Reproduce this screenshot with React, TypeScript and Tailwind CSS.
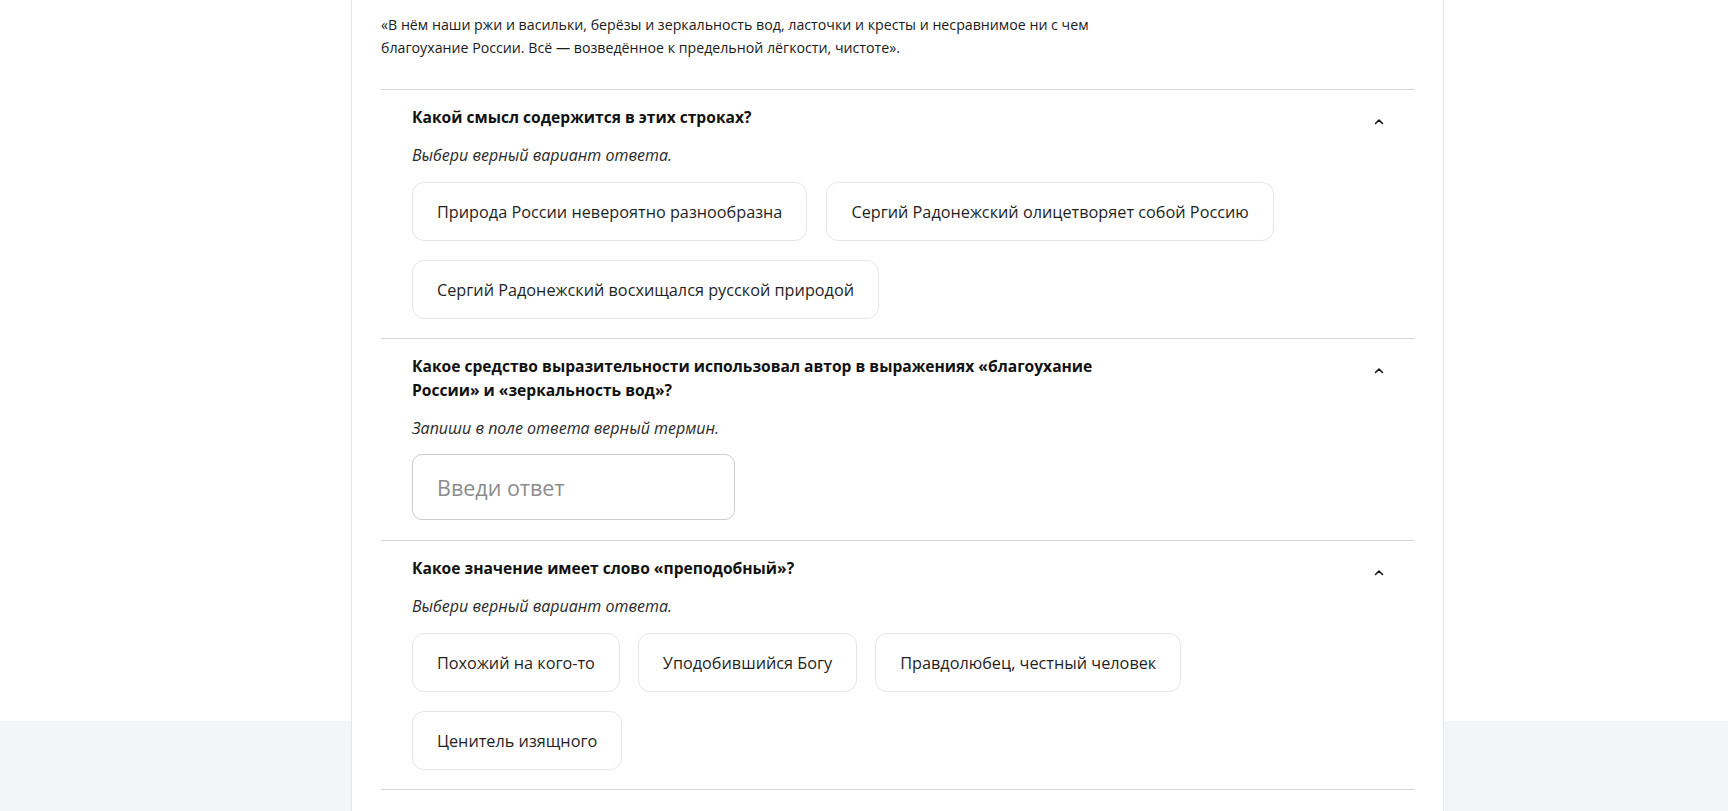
import React from "react";

function Chevron() {
  return (
    <svg width="10" height="7" viewBox="0 0 10 7" fill="none" className="block">
      <path d="M1.5 5.5 L5 2 L8.5 5.5" stroke="#111" strokeWidth="1.5" strokeLinecap="round" strokeLinejoin="round" />
    </svg>
  );
}

function Option({ text }: { text: string }) {
  return (
    <button
      type="button"
      className="h-[59px] px-[24px] rounded-[12px] border border-[#e6e6e6] bg-white text-[16.25px] text-[#1f1f1f] leading-6 whitespace-nowrap"
    >
      {text}
    </button>
  );
}

function Section({
  title,
  hint,
  children,
}: {
  title: string;
  hint: string;
  children: React.ReactNode;
}) {
  return (
    <div className="border-t border-[#d6d6d6] pl-[31px] pr-[31px] pt-[15px] pb-[19px]">
      <div className="flex items-start justify-between">
        <h3 className="max-w-[720px] text-[15.6px] leading-6 font-bold text-[#111]">{title}</h3>
        <div className="pt-[13px] -mr-[1px]">
          <Chevron />
        </div>
      </div>
      <p className="mt-[14px] text-[16px] leading-6 italic text-[#2a2a2a]">{hint}</p>
      <div className="mt-[15px]">{children}</div>
    </div>
  );
}

export default function App() {
  return (
    <div className="min-h-[811px] bg-[linear-gradient(to_bottom,#ffffff_721px,#f4f5f7_721px)] font-['Open_Sans','Noto_Sans',sans-serif]">
      <div className="ml-[351px] w-[1093px] min-h-[811px] bg-white border-x border-[#e6e6e6] px-[29px] pt-[13px]">
        <p className="max-w-[730px] text-[14.2px] leading-[23px] text-[#1a1a1a]">
          «В нём наши ржи и васильки, берёзы и зеркальность вод, ласточки и кресты и несравнимое ни с чем
          благоухание России. Всё — возведённое к предельной лёгкости, чистоте».
        </p>
        <div className="mt-[30px] border-b border-[#d6d6d6]">
          <Section title="Какой смысл содержится в этих строках?" hint="Выбери верный вариант ответа.">
            <div className="flex flex-wrap gap-x-[19px] gap-y-[19px]">
              <Option text="Природа России невероятно разнообразна" />
              <Option text="Сергий Радонежский олицетворяет собой Россию" />
              <Option text="Сергий Радонежский восхищался русской природой" />
            </div>
          </Section>
          <Section
            title="Какое средство выразительности использовал автор в выражениях «благоухание России» и «зеркальность вод»?"
            hint="Запиши в поле ответа верный термин."
          >
            <div className="-mt-[1px] mb-[1px]">
              <input
                type="text"
                placeholder="Введи ответ"
                className="block w-[323px] h-[66px] rounded-[10px] border border-[#cccccc] px-[24px] text-[21.5px] text-[#1a1a1a] placeholder:text-[#8c8c8c] outline-none"
              />
            </div>
          </Section>
          <Section title="Какое значение имеет слово «преподобный»?" hint="Выбери верный вариант ответа.">
            <div className="flex flex-wrap gap-x-[18px] gap-y-[19px]">
              <Option text="Похожий на кого-то" />
              <Option text="Уподобившийся Богу" />
              <Option text="Правдолюбец, честный человек" />
              <Option text="Ценитель изящного" />
            </div>
          </Section>
        </div>
      </div>
    </div>
  );
}
